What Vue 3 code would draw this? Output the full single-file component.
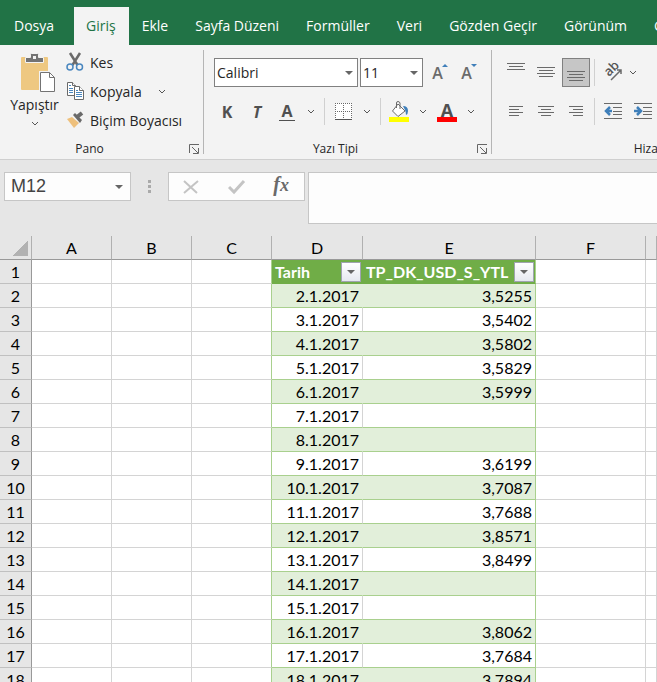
<template>
  <div class="excel">
    <nav class="tabs">
      <a
        v-for="tab in tabs"
        :key="tab"
        href="#"
        class="tab"
        :class="{ active: tab === activeTab, file: tab === 'Dosya' }"
        @click.prevent="activeTab = tab"
        >{{ tab }}</a
      >
    </nav>

    <div class="ribbon">
      <section class="group clipboard">
        <div class="groupBody">
          <button class="paste">
            <svg width="43" height="40" viewBox="-7 0 43 40">
              <rect x="1" y="4" width="27" height="33" rx="1" fill="#eec881" />
              <path
                d="M5.500 9.500V4.500h5V1.500q0-1 1-1h6q1 0 1 1v3h5v5z"
                fill="#737373"
                stroke="#f3f3f3"
              />
              <rect x="13" y="3" width="3" height="3" fill="#f3f3f3" />
              <path d="M19 18h11l6 6v15H19z" fill="#f3f3f3" />
              <path
                d="M20.500 19.500h9l5 5v14h-14z"
                fill="#fff"
                stroke="#737373"
              />
              <path d="M29.500 19.500v5h5" fill="none" stroke="#737373" />
            </svg>
            <span>Yapıştır</span>
            <svg class="chevron" viewBox="0 0 8 5"><path d="M1 1l3 3 3-3" /></svg>
          </button>
          <div class="commands">
            <button class="command">
              <svg width="18" height="20" viewBox="0 0 18 20">
                <path
                  d="M4 1l7.500 12M14 1L6.500 13"
                  stroke="#6a6a6a"
                  stroke-width="2.500"
                  fill="none"
                />
                <g fill="none" stroke="#4a87bf" stroke-width="1.500">
                  <circle cx="4" cy="15" r="3" />
                  <circle cx="13.500" cy="15" r="3" />
                </g>
              </svg>
              Kes
            </button>
            <button class="command">
              <svg width="18" height="20" viewBox="0 0 18 20">
                <g fill="#fff" stroke="#6a6a6a">
                  <path d="M1.500 1.500h5l3 3v10h-8z" />
                  <path d="M6.500 1.500v3h3" />
                  <path d="M8.500 5.500h5l4 4v9h-9z" />
                  <path d="M13.500 5.500v4h4" />
                </g>
                <path
                  d="M3 4.500h2M3 7.500h4M3 9.500h4M3 11.500h4M10 9.500h2M10 11.500h6M10 13.500h6M10 15.500h6"
                  stroke="#4a87bf"
                />
              </svg>
              Kopyala
              <svg class="chevron far" viewBox="0 0 8 5"><path d="M1 1l3 3 3-3" /></svg>
            </button>
            <button class="command">
              <svg width="18" height="20" viewBox="0 0 18 20">
                <path d="M1 9l5-2 7 6-5 5z" fill="#eec07c" />
                <path d="M7 5l2-2 7 7-2 3z" fill="#6a6a6a" />
                <path d="M11 7l5-4" stroke="#6a6a6a" stroke-width="4" />
              </svg>
              Biçim Boyacısı
            </button>
          </div>
        </div>
        <div class="groupTitle">
          Pano
          <button class="launcher" aria-label="Pano ayarları">
            <svg width="11" height="10" viewBox="0 0 11 10">
              <path d="M.500 9V.500H10M3 3l6 6M9.500 4v5.500H4" />
            </svg>
          </button>
        </div>
      </section>

      <section class="group font">
        <div class="groupBody rows">
          <div class="row">
            <div class="selectBox family">
              <select v-model="font" aria-label="Yazı Tipi">
                <option>Calibri</option>
                <option>Arial</option>
              </select>
            </div>
            <div class="selectBox size">
              <select v-model="fontSize" aria-label="Yazı Tipi Boyutu">
                <option>10</option>
                <option>11</option>
                <option>12</option>
              </select>
            </div>
            <button class="tool step up">A</button>
            <button class="tool step down">A</button>
          </div>
          <div class="row">
            <button class="tool letter">K</button>
            <button class="tool letter italic">T</button>
            <button class="tool letter"><span class="underlined">A</span></button>
            <button class="drop" aria-label="Altı çizili">
              <svg class="chevron" viewBox="0 0 8 5"><path d="M1 1l3 3 3-3" /></svg>
            </button>
            <i class="sep"></i>
            <button class="tool" aria-label="Kenarlıklar">
              <svg width="17" height="18" viewBox="0 0 17 18">
                <rect width="17" height="17" fill="#fff" />
                <path
                  d="M0 .500h17M0 8.500h17M.500 0v17M8.500 0v17M16.500 0v17"
                  stroke="#6a6a6a"
                  stroke-dasharray="1 1"
                />
                <path d="M0 16.500h17" stroke="#555" />
              </svg>
            </button>
            <button class="drop" aria-label="Kenarlık seç">
              <svg class="chevron" viewBox="0 0 8 5"><path d="M1 1l3 3 3-3" /></svg>
            </button>
            <i class="sep"></i>
            <button class="tool" aria-label="Dolgu Rengi">
              <svg width="20" height="22" viewBox="0 0 20 22">
                <path
                  d="M9 3l7 7-7 5.500-5.500-5.500z"
                  fill="#fff"
                  stroke="#6a6a6a"
                />
                <path
                  d="M7.500 7V2q0-1.500 1.500-1.500t2 1.500v6"
                  fill="none"
                  stroke="#6a6a6a"
                />
                <path d="M14 5q5 0 5 5 0 3-2 4 0-3-1-5z" fill="#3f7fba" />
                <rect y="16" width="20" height="5" fill="#ff0" />
              </svg>
            </button>
            <button class="drop" aria-label="Dolgu rengi seç">
              <svg class="chevron" viewBox="0 0 8 5"><path d="M1 1l3 3 3-3" /></svg>
            </button>
            <button class="tool fontColor">A</button>
            <button class="drop" aria-label="Yazı rengi seç">
              <svg class="chevron" viewBox="0 0 8 5"><path d="M1 1l3 3 3-3" /></svg>
            </button>
          </div>
        </div>
        <div class="groupTitle">
          Yazı Tipi
          <button class="launcher" aria-label="Yazı tipi ayarları">
            <svg width="11" height="10" viewBox="0 0 11 10">
              <path d="M.500 9V.500H10M3 3l6 6M9.500 4v5.500H4" />
            </svg>
          </button>
        </div>
      </section>

      <section class="group align">
        <div class="groupBody rows">
          <div class="row">
            <button
              v-for="a in vertical"
              :key="a.name"
              class="tool"
              :class="{ pressed: a.name === 'Alta Hizala' }"
              :aria-label="a.name"
            >
              <svg width="18" height="28" viewBox="0 0 18 28">
                <path :d="a.d" stroke="#6a6a6a" />
              </svg>
            </button>
            <i class="sep"></i>
            <button class="orient" aria-label="Yönlendirme">
              <svg width="20" height="20" viewBox="0 0 20 20">
                <text
                  x="0"
                  y="0"
                  transform="translate(6 14) rotate(-45)"
                  font-size="13"
                  font-weight="600"
                  fill="#555"
                >
                  ab
                </text>
                <path
                  d="M8 17L18 7M14 7h4v4"
                  fill="none"
                  stroke="#6a6a6a"
                  stroke-width="1.500"
                />
              </svg>
              <svg class="chevron" viewBox="0 0 8 5"><path d="M1 1l3 3 3-3" /></svg>
            </button>
          </div>
          <div class="row">
            <button
              v-for="a in horizontal"
              :key="a.name"
              class="tool"
              :aria-label="a.name"
            >
              <svg width="18" height="28" viewBox="0 0 18 28">
                <path :d="a.d" stroke="#6a6a6a" />
              </svg>
            </button>
            <i class="sep"></i>
            <button
              v-for="a in indents"
              :key="a.name"
              class="tool"
              :aria-label="a.name"
            >
              <svg width="18" height="28" viewBox="0 0 18 28">
                <path
                  d="M0 5.500h18M9 9.500h9M9 13.500h9M9 16.500h9M0 20.500h18"
                  stroke="#6a6a6a"
                />
                <path :d="a.d" fill="none" stroke="#3f7fba" stroke-width="2.500" />
              </svg>
            </button>
          </div>
        </div>
        <div class="groupTitle">Hizalama</div>
      </section>
    </div>

    <div class="formulaBar">
      <div class="nameBox">
        <input v-model="cell" aria-label="Ad Kutusu" />
      </div>
      <div class="dots"><i></i><i></i><i></i></div>
      <div class="formulaTools">
        <button aria-label="İptal">
          <svg width="18" height="16" viewBox="0 0 18 16">
            <path
              d="M1 2l13 12M15 2L1 14"
              fill="none"
              stroke="#c4c4c4"
              stroke-width="2"
            />
          </svg>
        </button>
        <button aria-label="Gir">
          <svg width="18" height="16" viewBox="0 0 18 16">
            <path
              d="M1 8l5 5L16 2"
              fill="none"
              stroke="#c4c4c4"
              stroke-width="3"
            />
          </svg>
        </button>
        <button class="fx">f<small>x</small></button>
      </div>
      <input class="formula" aria-label="Formül Çubuğu" />
    </div>

    <table class="sheet">
      <colgroup>
        <col class="wHead" />
        <col class="wCell" />
        <col class="wCell" />
        <col class="wCell" />
        <col class="wDate" />
        <col class="wRate" />
        <col class="wWide" />
        <col />
      </colgroup>
      <thead>
        <tr>
          <th class="corner"></th>
          <th v-for="col in columns" :key="col">{{ col }}</th>
        </tr>
      </thead>
      <tbody>
        <tr class="fields">
          <th>1</th>
          <td></td>
          <td></td>
          <td class="edge"></td>
          <td v-for="field in fields" :key="field" class="field">
            <div>
              <span>{{ field }}</span>
              <button class="filter" :aria-label="field + ' filtre'"></button>
            </div>
          </td>
          <td></td>
          <td></td>
        </tr>
        <tr
          v-for="(row, index) in rows"
          :key="row[0]"
          :class="{ band: index % 2 === 0 }"
        >
          <th>{{ index + 2 }}</th>
          <td></td>
          <td></td>
          <td class="edge"></td>
          <td class="data date">{{ row[0] }}</td>
          <td class="data rate">{{ row[1] }}</td>
          <td></td>
          <td></td>
        </tr>
      </tbody>
    </table>
  </div>
</template>

<script setup>
import { ref } from "vue";

const tabs = [
  "Dosya",
  "Giriş",
  "Ekle",
  "Sayfa Düzeni",
  "Formüller",
  "Veri",
  "Gözden Geçir",
  "Görünüm",
  "Geliştirici",
];
const activeTab = ref("Giriş");
const font = ref("Calibri");
const fontSize = ref("11");
const cell = ref("M12");

const vertical = [
  { name: "Üste Hizala", d: "M0 4.500h18M2 7.500h14M0 10.500h18" },
  { name: "Ortala", d: "M0 8.500h18M2 11.500h14M0 14.500h18M2 17.500h14" },
  { name: "Alta Hizala", d: "M0 12.500h18M2 15.500h14M0 18.500h18M2 21.500h14" },
];
const horizontal = [
  { name: "Sola Hizala", d: "M2 8.500h14M2 11.500h10M2 14.500h14M2 17.500h10" },
  { name: "Yatay Ortala", d: "M1 8.500h16M4 11.500h10M1 14.500h16M4 17.500h10" },
  { name: "Sağa Hizala", d: "M2 8.500h14M6 11.500h10M2 14.500h14M6 17.500h10" },
];
const indents = [
  { name: "Girintiyi Azalt", d: "M8 13H2M6 9l-4 4 4 4" },
  { name: "Girintiyi Artır", d: "M0 13h7M3 9l4 4-4 4" },
];

const columns = ["A", "B", "C", "D", "E", "F", ""];
const fields = ["Tarih", "TP_DK_USD_S_YTL"];
const rows = [
  ["2.1.2017", "3,5255"],
  ["3.1.2017", "3,5402"],
  ["4.1.2017", "3,5802"],
  ["5.1.2017", "3,5829"],
  ["6.1.2017", "3,5999"],
  ["7.1.2017", ""],
  ["8.1.2017", ""],
  ["9.1.2017", "3,6199"],
  ["10.1.2017", "3,7087"],
  ["11.1.2017", "3,7688"],
  ["12.1.2017", "3,8571"],
  ["13.1.2017", "3,8499"],
  ["14.1.2017", ""],
  ["15.1.2017", ""],
  ["16.1.2017", "3,8062"],
  ["17.1.2017", "3,7684"],
  ["18.1.2017", "3,7894"],
];
</script>

<style>
body {
  margin: 0;
  overflow: hidden;
}
</style>

<style scoped>
* {
  box-sizing: border-box;
}
.excel {
  height: 100vh;
  overflow: hidden;
  background: #e6e6e6;
  font-family: "Open Sans", "Noto Sans", sans-serif;
  font-size: 14px;
  color: #262626;
}
button {
  padding: 0;
  border: 0;
  background: none;
  font: inherit;
  color: inherit;
}
svg {
  display: block;
  flex: none;
}

/* tabs */
.tabs {
  display: flex;
  height: 45px;
  padding-top: 7px;
  background: #217346;
  overflow: hidden;
}
.tab {
  flex: none;
  padding: 0 14px 0 13px;
  line-height: 38px;
  color: #fff;
  text-decoration: none;
  white-space: nowrap;
}
.tab.file {
  padding: 0 20px 0 14px;
}
.tab.active {
  padding: 0 13px 0 12px;
  background: #f3f3f3;
  color: #217346;
}

/* ribbon */
.ribbon {
  display: flex;
  height: 115px;
  padding: 5px 0;
  background: #f3f3f3;
  border-bottom: 1px solid #cfcfcf;
  overflow: hidden;
}
.group {
  flex: none;
  display: flex;
  flex-direction: column;
  border-right: 1px solid #b5b5b5;
}
.clipboard {
  width: 204px;
}
.font {
  width: 288px;
}
.align {
  width: 336px;
}
.groupBody {
  display: flex;
  flex: 1;
}
.groupTitle {
  position: relative;
  padding-right: 24px;
  font-size: 12px;
  line-height: 18px;
  height: 14px;
  text-align: center;
}
.align .groupTitle {
  padding-right: 0;
}
.launcher {
  position: absolute;
  right: 3px;
  top: 4px;
}
.launcher path {
  fill: none;
  stroke: #666;
}
.chevron {
  width: 8px;
  height: 5px;
  fill: none;
  stroke: #555;
}
.chevron.far {
  margin-left: 10px;
}
.paste {
  display: flex;
  flex-direction: column;
  align-items: center;
  width: 66px;
  padding: 3px 0 0 3px;
}
.paste span {
  line-height: 24px;
}
.paste .chevron {
  margin-top: 4px;
}
.commands {
  display: flex;
  flex-direction: column;
  gap: 5px;
}
.command {
  display: flex;
  align-items: center;
  gap: 6px;
  height: 24px;
  white-space: nowrap;
}
.rows {
  flex-direction: column;
  gap: 10px;
  padding: 8px 0 0 9px;
}
.row {
  display: flex;
  align-items: center;
  height: 29px;
}
.font .rows {
  padding-left: 8px;
}
.selectBox {
  position: relative;
  height: 29px;
  margin-left: 2px;
}
.selectBox::after,
.nameBox::after {
  content: "";
  position: absolute;
  right: 5px;
  top: 13px;
  border: 4px solid transparent;
  border-top-color: #666;
  border-bottom: 0;
  pointer-events: none;
}
.family {
  width: 144px;
}
.size {
  width: 63px;
}
select {
  appearance: none;
  width: 100%;
  height: 100%;
  padding: 0 2px;
  border: 1px solid #808080;
  border-radius: 0;
  background: #fff;
  font: inherit;
  color: #262626;
}
.tool {
  display: flex;
  align-items: center;
  justify-content: center;
  flex: none;
  width: 30px;
  height: 29px;
}
.pressed {
  width: 28px;
  margin: 0 1px;
  border: 1px solid #808080;
  background: #c6c6c6;
}
.drop {
  display: flex;
  justify-content: center;
  width: 18px;
}
.sep {
  width: 1px;
  height: 27px;
  margin: 0 3px;
  background: #d0d0d0;
}
.font .sep {
  margin-left: 4px;
}
.letter,
.fontColor {
  font-size: 16px;
  font-weight: 700;
  color: #505050;
}
.italic {
  font-style: italic;
}
.underlined {
  line-height: 17px;
  border-bottom: 1px solid #505050;
  padding: 0 2px;
}
.fontColor {
  position: relative;
  font-size: 18px;
  line-height: 20px;
  padding-bottom: 4px;
}
.fontColor::after {
  content: "";
  position: absolute;
  left: 5px;
  bottom: 4px;
  width: 20px;
  height: 5px;
  background: #f00;
}
.step {
  position: relative;
  width: 29px;
  font-size: 16px;
  font-weight: 600;
  color: #6a6a6a;
}
.step::after {
  content: "";
  position: absolute;
  right: 4px;
  top: 6px;
  border: 3px solid transparent;
}
.up::after {
  border-bottom-color: #3f7fba;
  border-top: 0;
}
.down::after {
  border-top-color: #3f7fba;
  border-bottom: 0;
}
.orient {
  display: flex;
  align-items: center;
  gap: 6px;
  padding-left: 5px;
}

/* formula bar */
.formulaBar {
  display: flex;
  align-items: flex-start;
  height: 76px;
  padding: 12px 0 0 4px;
}
.nameBox {
  position: relative;
  width: 127px;
  height: 29px;
}
.nameBox::after {
  right: 8px;
}
.nameBox input,
.formula {
  width: 100%;
  height: 100%;
  padding: 0 6px;
  border: 1px solid #c6c6c6;
  border-radius: 0;
  background: #fdfdfd;
  font: 18px "Liberation Sans", sans-serif;
  color: #444;
}
.dots {
  display: flex;
  flex-direction: column;
  gap: 2px;
  padding: 8px 17px 0;
}
.dots i {
  width: 3px;
  height: 3px;
  background: #aaa;
}
.formulaTools {
  display: flex;
  flex: none;
  align-items: center;
  justify-content: space-between;
  width: 137px;
  height: 29px;
  padding: 0 15px 0 14px;
  border: 1px solid #c6c6c6;
  background: #fdfdfd;
}
.fx {
  padding-bottom: 4px;
  font: italic 700 20px/20px "Liberation Serif", serif;
  color: #6a6a6a;
}
.fx small {
  font-size: 18px;
}
.formula {
  flex: 1;
  width: auto;
  min-width: 0;
  height: 52px;
  margin-left: 3px;
  border-right: 0;
}

/* sheet */
.sheet {
  width: 100%;
  table-layout: fixed;
  border-collapse: separate;
  border-spacing: 0;
  font-family: Lato, "Open Sans", sans-serif;
  font-size: 16px;
  line-height: 23px;
  color: #000;
}
.wHead {
  width: 32px;
}
.wCell {
  width: 80px;
}
.wDate {
  width: 91px;
}
.wRate {
  width: 173px;
}
.wWide {
  width: 110px;
}
.sheet th,
.sheet td {
  height: 24px;
  padding: 0;
  border-right: 1px solid #d4d4d4;
  border-bottom: 1px solid #d4d4d4;
  font-weight: 400;
}
.sheet td {
  background: #fff;
}
.sheet thead th {
  border-right-color: #b0b0b0;
  border-bottom-color: #999;
}
.sheet tbody th {
  border-right-color: #999;
  border-bottom-color: #c0c0c0;
}
.corner {
  background: linear-gradient(135deg, transparent 50%, #b2b2b2 50%) 12px 4px /
    16px 16px no-repeat;
}
.sheet .edge {
  border-right-color: #a9d08e;
}
.sheet .field {
  background: #70ad47;
  border-color: #70ad47;
  color: #fff;
  font-weight: 700;
}
.field + .field {
  border-right-color: #a9d08e;
}
.field div {
  display: flex;
  justify-content: space-between;
  align-items: center;
  height: 23px;
  padding: 0 1px 0 3px;
}
.filter {
  display: flex;
  align-items: center;
  justify-content: center;
  flex: none;
  width: 20px;
  height: 20px;
  border: 1px solid #a0a4b0;
  background: linear-gradient(#fff, #e6e9f0);
}
.filter::after {
  content: "";
  border: 4px solid transparent;
  border-top-color: #666;
  border-bottom: 0;
}
.sheet .data {
  padding-right: 3px;
  text-align: right;
  border-bottom-color: #a9d08e;
}
.sheet .rate {
  border-right-color: #a9d08e;
}
.band .data {
  background: #e2efda;
}
.sheet .band .date {
  border-right-color: #e2efda;
}
</style>
